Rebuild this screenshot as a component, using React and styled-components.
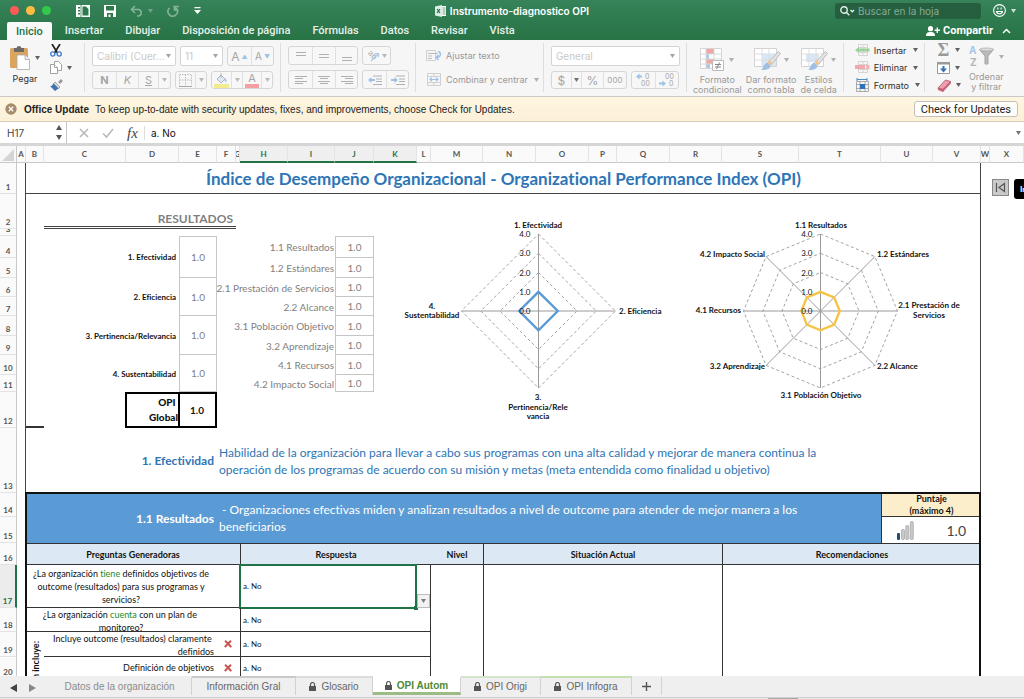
import React, { useState } from "react";
import styled, { createGlobalStyle, css } from "styled-components";

const columns = [
  ["A", 9], ["B", 18], ["C", 82], ["D", 53], ["E", 38], ["F", 19],
  ["G", 4], ["H", 48], ["I", 47], ["J", 39], ["K", 43], ["L", 14],
  ["M", 52], ["N", 53], ["O", 53], ["P", 28], ["Q", 53], ["R", 52],
  ["S", 77], ["T", 82], ["U", 52], ["V", 48], ["W", 9], ["X", 34],
];

const rowHeights = [
  31, 35, 7, 22, 20, 19, 19, 20, 19, 20, 17, 36, 65, 24, 26, 22, 43, 24, 25, 22,
];

const menuTabs = [
  "Insertar", "Dibujar", "Disposición de página", "Fórmulas", "Datos", "Revisar", "Vista",
];

const areas = [
  { name: "1. Efectividad", from: 4 },
  { name: "2. Eficiencia", from: 6 },
  { name: "3. Pertinencia/Relevancia", from: 8 },
  { name: "4. Sustentabilidad", from: 10 },
];

const subareas = [
  "1.1 Resultados",
  "1.2 Estándares",
  "2.1 Prestación de Servicios",
  "2.2 Alcance",
  "3.1 Población Objetivo",
  "3.2 Aprendizaje",
  "4.1 Recursos",
  "4.2 Impacto Social",
];

// "C2:F3" -> grid-area; line 1 is taken by the headings
const at = (range) => {
  const [a, b = a] = range.split(":");
  const col = (ref) => ref.charCodeAt(0) - 63;
  const row = (ref) => Number(ref.slice(1)) + 1;
  return `${row(a)} / ${col(a)} / ${row(b) + 1} / ${col(b) + 1}`;
};

const App = () => {
  const [formula, setFormula] = useState("a. No");
  const [cellName, setCellName] = useState("H17");
  const [search, setSearch] = useState("");

  return (
    <Window>
      <GlobalStyle />
      <Header>
        <TitleBar>
          <QuickBar>
            <Lights>
              <Light $color="#fc5b57" />
              <Light $color="#fdbc40" />
              <Light $color="#34c84a" />
            </Lights>
            <QuickButton aria-label="Plantillas"><TemplateIcon /></QuickButton>
            <QuickButton aria-label="Guardar"><SaveIcon /></QuickButton>
            <QuickButton aria-label="Deshacer" $dim><UndoIcon /><Caret /></QuickButton>
            <QuickButton aria-label="Rehacer" $dim><RedoIcon /></QuickButton>
            <QuickButton aria-label="Personalizar"><MoreIcon /></QuickButton>
          </QuickBar>
          <DocTitle><BookIcon />Instrumento-diagnostico OPI</DocTitle>
          <TitleEnd>
            <Search>
              <SearchIcon />
              <input
                type="text"
                aria-label="Buscar en la hoja"
                placeholder="Buscar en la hoja"
                value={search}
                onChange={(e) => setSearch(e.target.value)}
              />
            </Search>
            <QuickButton aria-label="Comentarios"><SmileIcon /><Caret /></QuickButton>
          </TitleEnd>
        </TitleBar>
        <MenuRow>
          <MenuTab $active>Inicio</MenuTab>
          {menuTabs.map((tab) => (
            <MenuTab key={tab}>{tab}</MenuTab>
          ))}
          <Share><PersonIcon />Compartir</Share>
          <Collapse aria-label="Contraer cinta">
            <svg width="9" height="6" viewBox="0 0 9 6"><path d="M1 5l3.500-3.500L8 5" fill="none" stroke="#fff" strokeWidth="1.500" /></svg>
          </Collapse>
        </MenuRow>
      </Header>

      <Ribbon>
        <PasteGroup>
          <BigButton><IconLine><ClipboardIcon /><Caret /></IconLine>Pegar</BigButton>
          <IconStack>
            <Tool aria-label="Cortar"><CutIcon /></Tool>
            <Tool aria-label="Copiar"><CopyIcon /><Caret /></Tool>
            <Tool aria-label="Copiar formato"><BrushIcon /></Tool>
          </IconStack>
        </PasteGroup>
        <Group>
          <ToolRow>
            <Picker label="Fuente" value="Calibri (Cuer..." width={84} />
            <Picker label="Tamaño" value="11" width={43} />
            <Segment>
              <SegButton aria-label="Aumentar" $w={24} $size={12}>A<Blue>▲</Blue></SegButton>
              <SegButton aria-label="Reducir" $w={23} $size={10}>A<Blue>▼</Blue></SegButton>
            </Segment>
          </ToolRow>
          <ToolRow>
            <Segment>
              <SegButton $w={24}><b>N</b></SegButton>
              <SegButton $w={23}><i>K</i></SegButton>
              <SegButton $w={21}><u>S</u></SegButton>
              <SegButton $w={13} aria-label="Más subrayados"><Caret /></SegButton>
            </Segment>
            <Segment>
              <SegButton $w={20} aria-label="Bordes"><BordersIcon /></SegButton>
              <SegButton $w={12} aria-label="Más bordes"><Caret /></SegButton>
            </Segment>
            <Segment>
              <SegButton $w={20} aria-label="Relleno"><FillIcon /></SegButton>
              <SegButton $w={12} aria-label="Más rellenos"><Caret /></SegButton>
              <SegButton $w={20} aria-label="Color de fuente"><Ink>A</Ink></SegButton>
              <SegButton $w={12} aria-label="Más colores"><Caret /></SegButton>
            </Segment>
          </ToolRow>
        </Group>
        <Group>
          <ToolRow>
            <Segment>
              <SegButton $w={24} aria-label="Arriba"><Lines rows={[[2, 3, 10], [2, 6, 10]]} /></SegButton>
              <SegButton $w={24} aria-label="Medio"><Lines rows={[[2, 5, 10], [2, 8, 10]]} /></SegButton>
              <SegButton $w={23} aria-label="Abajo"><Lines rows={[[2, 8, 10], [2, 11, 10]]} /></SegButton>
            </Segment>
            <Segment>
              <SegButton $w={28} aria-label="Orientación"><OrientIcon /><Caret /></SegButton>
            </Segment>
          </ToolRow>
          <ToolRow>
            <Segment>
              <SegButton $w={24} aria-label="Izquierda"><Lines rows={[[1, 3, 12], [1, 5, 8], [1, 8, 12], [1, 10, 8]]} /></SegButton>
              <SegButton $w={24} aria-label="Centro"><Lines rows={[[1, 3, 12], [3, 5, 8], [1, 8, 12], [3, 10, 8]]} /></SegButton>
              <SegButton $w={23} aria-label="Derecha"><Lines rows={[[1, 3, 12], [5, 5, 8], [1, 8, 12], [5, 10, 8]]} /></SegButton>
            </Segment>
            <Segment>
              <SegButton $w={24} aria-label="Reducir sangría"><IndentIcon /></SegButton>
              <SegButton $w={23} aria-label="Aumentar sangría"><IndentIcon flip /></SegButton>
            </Segment>
          </ToolRow>
        </Group>
        <TextGroup>
          <TextTool $dim><WrapIcon />Ajustar texto</TextTool>
          <TextTool $dim><MergeIcon />Combinar y centrar<Caret /></TextTool>
        </TextGroup>
        <Group>
          <ToolRow><Picker label="Formato de número" value="General" width={129} /></ToolRow>
          <ToolRow>
            <Segment>
              <SegButton $w={20} $size={12}>$</SegButton>
              <SegButton $w={11} $dark aria-label="Más monedas"><Caret /></SegButton>
              <SegButton $w={23} $size={12}>%</SegButton>
              <SegButton $w={24} $size={8}>000</SegButton>
            </Segment>
            <Segment>
              <SegButton $w={24} aria-label="Más decimales"><DecimalIcon /></SegButton>
              <SegButton $w={24} aria-label="Menos decimales"><DecimalIcon less /></SegButton>
            </Segment>
          </ToolRow>
        </Group>
        <WideGroup>
          <BigButton $dim><IconLine><ConditionalIcon /><Caret /></IconLine>Formato<br />condicional</BigButton>
          <BigButton $dim><IconLine><TableBrushIcon /><Caret /></IconLine>Dar formato<br />como tabla</BigButton>
          <BigButton $dim><IconLine><TableBrushIcon small /><Caret /></IconLine>Estilos<br />de celda</BigButton>
        </WideGroup>
        <StackGroup>
          <TextTool><RowIcon color="#9ad29a" arrow />Insertar<Caret /></TextTool>
          <TextTool><RowIcon color="#f2a9ab" />Eliminar<Caret /></TextTool>
          <TextTool><SizeIcon />Formato<Caret /></TextTool>
        </StackGroup>
        <EditGroup>
          <IconStack>
            <Tool aria-label="Autosuma"><Sigma>Σ</Sigma><Caret /></Tool>
            <Tool aria-label="Rellenar"><FillDownIcon /><Caret /></Tool>
            <Tool aria-label="Borrar"><EraserIcon /><Caret /></Tool>
          </IconStack>
          <BigButton $dim><IconLine><SortIcon /><Caret /></IconLine>Ordenar<br />y filtrar</BigButton>
        </EditGroup>
      </Ribbon>

      <UpdateBar>
        <CloseRound aria-label="Cerrar aviso"><RoundXIcon /></CloseRound>
        <b>Office Update</b>
        <span>To keep up-to-date with security updates, fixes, and improvements, choose Check for Updates.</span>
        <UpdateButton>Check for Updates</UpdateButton>
      </UpdateBar>

      <FormulaBar>
        <NameBox>
          <input type="text" aria-label="Cuadro de nombres" value={cellName} onChange={(e) => setCellName(e.target.value)} />
          <svg width="6" height="15" viewBox="0 0 6 15" fill="#555"><path d="M3 0l3 5H0zM3 15l3-5H0z" /></svg>
        </NameBox>
        <FormulaTools>
          <svg width="10" height="10" viewBox="0 0 10 10"><path d="M1 1l8 8M9 1L1 9" stroke="#b9b9b9" strokeWidth="1.600" /></svg>
          <svg width="12" height="10" viewBox="0 0 12 10"><path d="M1 5.500L4.500 9L11 1" fill="none" stroke="#b9b9b9" strokeWidth="1.600" /></svg>
          <Fx>fx</Fx>
        </FormulaTools>
        <FormulaInput type="text" aria-label="Barra de fórmulas" value={formula} onChange={(e) => setFormula(e.target.value)} />
        <Caret />
      </FormulaBar>

      <SheetArea>
        <Sheet>
          <thead>
            <tr>
              <Corner><svg width="12" height="12" viewBox="0 0 12 12"><path d="M12 0v12H0z" fill="#d4d4d4" /></svg></Corner>
              {columns.map(([name]) => (
                <ColHead key={name} $active={"HIJK".includes(name)}>{name}</ColHead>
              ))}
            </tr>
          </thead>
          <tbody>
            <Row n={1}>
              <Frame $at="B1:V13" aria-hidden="true" />
              <TitleCell $at="B1:V1"><h1>Índice de Desempeño Organizacional - Organizational Performance Index (OPI)</h1></TitleCell>
              <NavCell $at="W1:X2">
                <NavButton aria-label="Ir al inicio">
                  <svg width="11" height="11" viewBox="0 0 11 11"><path d="M1.500 1v9M9.500 1.500v8L4 5.500z" fill="none" stroke="#555" strokeWidth="1.200" /></svg>
                </NavButton>
                <NavLabel href="#inicio">Inicio</NavLabel>
              </NavCell>
            </Row>
            <Row n={2}>
              <ResultsTitle $at="C2:F2">RESULTADOS</ResultsTitle>
              <ChartCell $at="L2:Q12"><AreaChart /></ChartCell>
              <ChartCell $at="R2:V12"><SubareaChart /></ChartCell>
            </Row>
            <Row n={3} />
            {[4, 5, 6, 7, 8, 9, 10, 11].map((n) => {
              const area = areas.find((a) => a.from === n);
              return (
                <Row n={n} key={n}>
                  {area && <AreaName $at={`B${n}:D${n + 1}`}>{area.name}</AreaName>}
                  {area && <Score $at={`E${n}:E${n + 1}`} $first={n === 4}>1.0</Score>}
                  <SubName $at={`F${n}:I${n}`}>{subareas[n - 4]}</SubName>
                  <Score $at={`J${n}`} $first={n === 4}>1.0</Score>
                </Row>
              );
            })}
            <Row n={12}>
              <EdgeMark $at="B12" aria-hidden="true" />
              <GlobalName $at="D12">OPI&nbsp;<br />Global</GlobalName>
              <GlobalScore $at="E12">1.0</GlobalScore>
            </Row>
            <Row n={13}>
              <SectionName $at="B13:E13">1. Efectividad</SectionName>
              <SectionText $at="F13:V13">
                Habilidad de la organización para llevar a cabo sus programas con una alta calidad y mejorar de manera continua la<br />
                operación de los programas de acuerdo con su misión y metas (meta entendida como finalidad u objetivo)
              </SectionText>
            </Row>
            <Row n={14}>
              <SectionName $at="B14:E15" $band>1.1 Resultados</SectionName>
              <SectionText $at="F14:T15" $band>
                &nbsp;- Organizaciones efectivas miden y analizan resultados a nivel de outcome para atender de mejor manera a los<br />
                beneficiarios
              </SectionText>
              <PointsHead $at="U14:V14">Puntaje<br />(máximo 4)</PointsHead>
            </Row>
            <Row n={15}>
              <Points $at="U15:V15"><div><BarsIcon />1.0</div></Points>
            </Row>
            <Row n={16}>
              <HeadCell $at="B16:G16">Preguntas Generadoras</HeadCell>
              <HeadCell $at="H16:L16" $line>Respuesta</HeadCell>
              <HeadCell $at="M16">Nivel</HeadCell>
              <HeadCell $at="N16:R16" $line>Situación Actual</HeadCell>
              <HeadCell $at="S16:V16" $line>Recomendaciones</HeadCell>
            </Row>
            <Row n={17} active>
              <Question $at="B17:G17">
                ¿La organización <em>tiene</em> definidos objetivos de<br />outcome (resultados) para sus programas y<br />servicios?
              </Question>
              <Answer $at="H17:L17">a. No</Answer>
              <Selection $at="H17:K17"><Handle /></Selection>
              <DropCell $at="L17"><DropButton aria-label="Abrir lista"><Caret /></DropButton></DropCell>
              <Blank $at="N17:R20" aria-hidden="true" />
              <Blank $at="S17:V20" aria-hidden="true" />
            </Row>
            <Row n={18}>
              <Question $at="B18:G18">
                ¿La organización <em>cuenta</em> con un plan de&nbsp;<br />monitoreo?
              </Question>
              <Answer $at="H18:L18">a. No</Answer>
            </Row>
            <Row n={19}>
              <SideText $at="B19:B20"><span>n incluye:</span></SideText>
              <Question $at="C19:G19" $right>Incluye outcome (resultados) claramente&nbsp;<br />definidos<CrossIcon /></Question>
              <Answer $at="H19:L19">a. No</Answer>
            </Row>
            <Row n={20}>
              <Question $at="C20:G20" $right>Definición de objetivos<CrossIcon /></Question>
              <Answer $at="H20:L20">a. No</Answer>
            </Row>
            <tr><OuterFrame $at="B14:V20" aria-hidden="true" /></tr>
          </tbody>
        </Sheet>
      </SheetArea>

      <SheetTabs>
        <TabArrows>
          <button aria-label="Hoja anterior"><svg width="7" height="8" viewBox="0 0 7 8"><path d="M7 0v8L0 4z" fill="#444" /></svg></button>
          <button aria-label="Hoja siguiente"><svg width="7" height="8" viewBox="0 0 7 8"><path d="M0 0v8l7-4z" fill="#888" /></svg></button>
        </TabArrows>
        <SheetTab $w={144} $faded>Datos de la organización</SheetTab>
        <SheetTab $w={104} $strip="#c9c9c9">Información Gral</SheetTab>
        <SheetTab $w={77} $strip="#dcdcdc"><LockIcon />Glosario</SheetTab>
        <SheetTab $w={88} $active><LockIcon />OPI Autom</SheetTab>
        <SheetTab $w={80} $strip="#d5e5c9"><LockIcon />OPI Origi</SheetTab>
        <SheetTab $w={91} $strip="#c4dfb2"><LockIcon />OPI Infogra</SheetTab>
        <SheetTab $w={30} aria-label="Agregar hoja">
          <svg width="9" height="9" viewBox="0 0 9 9"><path d="M4.500 0v9M0 4.500h9" stroke="#555" strokeWidth="1.400" /></svg>
        </SheetTab>
      </SheetTabs>
      <ScrollTrack><ScrollThumb /></ScrollTrack>
    </Window>
  );
};

const Row = ({ n, active, children }) => (
  <tr>
    <RowHead scope="row" $at={n} $active={active}>{n}</RowHead>
    {children}
  </tr>
);

const Picker = ({ label, value, width }) => (
  <PickerBox $w={width}>
    <select aria-label={label} defaultValue={value}>
      <option>{value}</option>
    </select>
    <Caret />
  </PickerBox>
);

const Caret = () => (
  <CaretSvg width="5" height="4" viewBox="0 0 5 4"><path d="M0 0h5L2.500 4z" fill="currentColor" /></CaretSvg>
);

const Lines = ({ rows }) => (
  <svg width="14" height="14" viewBox="0 0 14 14">
    {rows.map(([x, y, w]) => (
      <rect key={y} x={x} y={y} width={w} height="1" fill="#b0b0b0" />
    ))}
  </svg>
);

/* radar charts */

const ring = (cx, cy, r, n) =>
  Array.from({ length: n }, (_, i) => {
    const a = (Math.PI * 2 * i) / n;
    return `${(cx + r * Math.sin(a)).toFixed(1)},${(cy - r * Math.cos(a)).toFixed(1)}`;
  });

const Radar = ({ cx, cy, r, sides, color, width, children }) => (
  <ChartSvg width={width} height="234" viewBox={`0 0 ${width} 234`}>
    {[2, 3, 4].map((k) => (
      <polygon key={k} points={ring(cx, cy, (r * k) / 4, sides).join(" ")} fill="none" stroke="#a3a3a3" strokeDasharray="3 2.500" />
    ))}
    {ring(cx, cy, r, sides).map((p) => (
      <line key={p} x1={cx} y1={cy} x2={p.split(",")[0]} y2={p.split(",")[1]} stroke="#9a9a9a" />
    ))}
    <polygon points={ring(cx, cy, r / 4, sides).join(" ")} fill="none" stroke={color} strokeWidth="2.400" />
    {[0, 1, 2, 3, 4].map((k) => (
      <Tick key={k} x={cx - 8} y={cy + 3 - (r * k) / 4} textAnchor="end">{k}.0</Tick>
    ))}
    {children}
  </ChartSvg>
);

const AreaChart = () => (
  <Radar cx={121.5} cy={117} r={77} sides={4} color="#5b9bd5" width={253}>
    <text x="121" y="34" textAnchor="middle">1. Efectividad</text>
    <text x="202" y="120" textAnchor="start">2. Eficiencia</text>
    <text x="121" y="206" textAnchor="middle">3.</text>
    <text x="121" y="216" textAnchor="middle">Pertinencia/Rele</text>
    <text x="121" y="225" textAnchor="middle">vancia</text>
    <text x="15" y="115" textAnchor="middle">4.</text>
    <text x="15" y="124" textAnchor="middle">Sustentabilidad</text>
  </Radar>
);

const SubareaChart = () => (
  <Radar cx={150.5} cy={117} r={77} sides={8} color="#f6c344" width={311}>
    <text x="151" y="34" textAnchor="middle">1.1 Resultados</text>
    <text x="207" y="63" textAnchor="start">1.2 Estándares</text>
    <text x="259" y="114" textAnchor="middle">2.1 Prestación de</text>
    <text x="259" y="124" textAnchor="middle">Servicios</text>
    <text x="207" y="175" textAnchor="start">2.2 Alcance</text>
    <text x="151" y="204" textAnchor="middle">3.1 Población Objetivo</text>
    <text x="95" y="175" textAnchor="end">3.2 Aprendizaje</text>
    <text x="71" y="119" textAnchor="end">4.1 Recursos</text>
    <text x="95" y="63" textAnchor="end">4.2 Impacto Social</text>
  </Radar>
);

/* icons */

const TemplateIcon = () => (
  <svg width="14" height="12" viewBox="0 0 14 12"><path d="M0 0h14v12H0z" fill="#fff" /><path d="M2 2h2v1.500H2zM2 5h2v1.500H2zM2 8h2v1.500H2zM6.500 1.500H10l2.500 2.500v6.500h-6z" fill="#2c7a4b" /><path d="M5 0v12" stroke="#2c7a4b" strokeWidth=".8" /></svg>
);
const SaveIcon = () => (
  <svg width="12" height="12" viewBox="0 0 12 12"><path d="M0 0h12v12H0z" fill="#fff" /><path d="M2 1h8v4.500H2zM3 8h6v4H3z" fill="#2c7a4b" /><path d="M4.500 9.500h2V12h-2z" fill="#fff" /></svg>
);
const UndoIcon = () => (
  <svg width="13" height="12" viewBox="0 0 13 12" fill="none" stroke="#fff" strokeWidth="1.600"><path d="M5 1L1.500 4.500L5 8M2 4.500h6.500a3.300 3.300 0 0 1 0 6.500H7" /></svg>
);
const RedoIcon = () => (
  <svg width="13" height="12" viewBox="0 0 13 12" fill="none" stroke="#fff" strokeWidth="1.600"><path d="M7.500 1v4H11.500M2.500 3A4.700 4.700 0 1 0 10 4.500L7.500 1.500H12" /></svg>
);
const MoreIcon = () => (
  <svg width="7" height="7" viewBox="0 0 7 7" fill="#fff"><path d="M.5 0h6v1.300h-6zM0 3h7L3.500 7z" /></svg>
);
const BookIcon = () => (
  <svg width="11" height="12" viewBox="0 0 11 12"><path d="M5 1h6v10H5z" fill="#fff" /><path d="M0 1.500L7 0v12L0 10.500z" fill="#dfeee5" /><path d="M2 4l3 4M5 4L2 8" stroke="#1f6e43" strokeWidth="1.200" /><path d="M7.500 3h3M7.500 5h3M7.500 7h3M7.500 9h3" stroke="#1f6e43" strokeWidth=".7" /></svg>
);
const SearchIcon = () => (
  <svg width="15" height="10" viewBox="0 0 15 10" fill="none" stroke="#e3efe8" strokeWidth="1.400"><circle cx="4" cy="4" r="3.200" /><path d="M6.500 6.500L9.300 9.300M10.500 4l1.800 1.800L14 4" /></svg>
);
const SmileIcon = () => (
  <svg width="13" height="13" viewBox="0 0 13 13" fill="none" stroke="#fff" strokeWidth="1.100"><circle cx="6.500" cy="6.500" r="5.900" /><path d="M3.500 7.500a3.100 3.100 0 0 0 6 0z" /><path d="M4.900 3.500v2M8.100 3.500v2" /></svg>
);
const PersonIcon = () => (
  <svg width="14" height="10" viewBox="0 0 14 10" fill="#fff"><circle cx="4.500" cy="2.700" r="2.600" /><path d="M0 10c0-3.500 2-4 4.500-4S9 6.500 9 10z" /><path d="M11.300 1.500v5.400M8.600 4.200H14" stroke="#fff" strokeWidth="1.400" /></svg>
);
const ClipboardIcon = () => (
  <svg width="20" height="25" viewBox="0 0 20 25"><rect x="0" y="3" width="18" height="20" rx="1.500" fill="#dca55e" /><path d="M4 3h2.500a2.600 2.600 0 0 1 5 0H14v4H4z" fill="#6a6a6a" /><path d="M7 10h8l4.500 4.500V24.500H7z" fill="#fff" stroke="#aaa" strokeWidth=".8" /><path d="M15 10v4.500h4.500" fill="#eee" stroke="#aaa" strokeWidth=".8" /></svg>
);
const CutIcon = () => (
  <svg width="12" height="13" viewBox="0 0 12 13" fill="none"><path d="M2 0l5.500 9M10 0L4.500 9" stroke="#222" strokeWidth="1.700" /><circle cx="2.800" cy="10" r="2.100" stroke="#3d7fc4" strokeWidth="1.300" /><circle cx="9.200" cy="10" r="2.100" stroke="#3d7fc4" strokeWidth="1.300" /></svg>
);
const CopyIcon = () => (
  <svg width="12" height="13" viewBox="0 0 12 13" fill="#fff" stroke="#a2a2a2"><path d="M4.500 .5h4l3 3v6h-7z" /><path d="M.5 3.500h4l3 3v6h-7z" /><path d="M4.500 3.500v3h3" /></svg>
);
const BrushIcon = () => (
  <svg width="13" height="12" viewBox="0 0 13 12"><path d="M8 3l3-3 2 2-3 3z" fill="#999" /><path d="M5 3l5 5-1.500 1.500-5-5z" fill="#d9d9d9" stroke="#777" strokeWidth=".6" /><path d="M3.500 4.500l5 5L5 12 0 7c1.500.3 2.500-.7 3.500-2.500z" fill="#3f74b0" /></svg>
);
const BordersIcon = () => (
  <svg width="13" height="13" viewBox="0 0 13 13" fill="none" stroke="#c0c0c0"><path d="M.5 .5h12v11M.5 .5v11M6.500 .5v11M.5 6h12" strokeDasharray="1.500 1" /><path d="M0 12.500h13" stroke="#aaa" /></svg>
);
const FillIcon = () => (
  <svg width="15" height="15" viewBox="0 0 15 15"><path d="M3 6l4-4 4 4-4 4z" fill="#dcebf8" stroke="#b5b5b5" /><path d="M11 5c2 2 2 3 1 4.500L10 7z" fill="#a8c9ea" /><path d="M7 0v5" stroke="#b5b5b5" /><path d="M0 11h15v4H0z" fill="#f3ec8e" /></svg>
);
const OrientIcon = () => (
  <svg width="14" height="13" viewBox="0 0 14 13" overflow="visible"><text x="1" y="6" fontSize="8" fill="#aaa" transform="rotate(45 3 6)">ab</text><path d="M5 12l7-7M9 4.500h3.500V8" fill="none" stroke="#a8c9ea" strokeWidth="1.200" /></svg>
);
const IndentIcon = ({ flip }) => (
  <svg width="14" height="10" viewBox="0 0 14 10"><path d={flip ? "M7 5L3.500 2v2H0v2h3.500v2z" : "M0 5l3.500-3v2H7v2H3.500v2z"} fill="#9cc2e8" /><path d="M5 1h9M8 4h6M8 6.500h6M5 9.500h9" stroke="#b0b0b0" /></svg>
);
const WrapIcon = () => (
  <svg width="16" height="11" viewBox="0 0 16 11" fill="none"><path d="M.5 .5h9v10h-9z" stroke="#cfcfcf" /><path d="M2 3.500h10M2 6h4M2 8.500h4" stroke="#bbb" /><path d="M12 1.500c3.500 0 3.500 6-1.500 6M12.500 5L10 7.500 12.500 10" stroke="#9cc2e8" strokeWidth="1.500" /></svg>
);
const MergeIcon = () => (
  <svg width="16" height="13" viewBox="0 0 16 13" fill="none"><path d="M1.500 .5h13v12h-13zM1.500 3.500h13M1.500 9.500h13M8 .5v3M8 9.500v3" stroke="#cfcfcf" /><path d="M4 6.500h8M6 4.800L4 6.500l2 1.700M10 4.800l2 1.700-2 1.700" stroke="#9cc2e8" strokeWidth="1.200" /></svg>
);
const DecimalIcon = ({ less }) => (
  <svg width="16" height="14" viewBox="0 0 16 14" fill="#a6a6a6">
    <text x={less ? 6 : 10} y="6" fontSize="7">{less ? "00" : "0"}</text>
    <text x={less ? 10 : 6} y="13" fontSize="7">{less ? "0" : "00"}</text>
    <path d={less ? "M7 10.500L3.500 7.500v2H0v2h3.500v2z" : "M1 3.500l3.500-3v2H7v2H4.500v2z"} fill="#9cc2e8" />
  </svg>
);
const ConditionalIcon = () => (
  <svg width="24" height="23" viewBox="0 0 24 23" fill="none"><path d="M.5 .5h21v20H.5z" fill="#fff" stroke="#d5d5d5" /><path d="M6 1h8v5H6zM6 11h8v5H6z" fill="#f0a6a6" /><path d="M6 6h3v5H6zM6 16h4v4H6z" fill="#a9c8ea" /><path d="M.5 6h21M.5 11h21M.5 16h21M6 .5v20M14 .5v20" stroke="#d9d9d9" /><path d="M12.500 12.500h11v10h-11z" fill="#fff" stroke="#bbb" /><path d="M15 16.500h6M15 19h6M19.500 14.500l-3 6.500" stroke="#888" /></svg>
);
const TableBrushIcon = ({ small }) => (
  <svg width="27" height="23" viewBox="0 0 27 23" fill="none"><path d="M.5 .5h22v18H.5z" fill="#fff" stroke="#d2d2d2" /><path d={small ? "M5 6h13v8H5z" : "M8 6h14v12H8z"} fill="#d9e8f6" /><path d="M.5 6h22M.5 12h22M8 .5v18M15 .5v18" stroke="#ddd" /><path d="M24.500 3.500l2 2-9 11-3-2.500z" fill="#e3e3e3" stroke="#aaa" strokeWidth=".7" /><path d="M7 22c2.500-1 2-6.500 6.500-7.500l3 3c-.5 4-5 5-9.500 4.500z" fill="#9fc0e4" /><path d="M13.500 14l3 3.500 2-2-3-3.500z" fill="#f2c38b" /></svg>
);
const RowIcon = ({ color, arrow }) => (
  <svg width="15" height="13" viewBox="0 0 15 13" fill="none"><path d="M3.500 .5h9v11h-9zM3.500 3.500h9M3.500 8.500h9M8 .5v11" stroke="#d5d5d5" /><path d={arrow ? "M0 6l4-3v1.500h10.500v3H4V9z" : "M0 4h10v4H0z"} fill={color} />{!arrow && <path d="M11 4l3.500 4M14.500 4L11 8" stroke={color} strokeWidth="1.300" />}</svg>
);
const SizeIcon = () => (
  <svg width="15" height="14" viewBox="0 0 15 14" fill="none"><path d="M1.500 3.500h12v10h-12zM1.500 6.500h12M1.500 10.500h12M5 3.500v10M10 3.500v10" stroke="#999" strokeWidth=".8" /><path d="M5 6h5v5H5z" fill="#2f72b9" /><path d="M2 1.500h10M2 0v3M12 0v3" stroke="#4c8ccb" /></svg>
);
const FillDownIcon = () => (
  <svg width="13" height="12" viewBox="0 0 13 12"><path d="M.5 .5h12v11H.5z" fill="#fff" stroke="#999" /><path d="M0 0h13v2.500H0z" fill="#999" /><path d="M5.500 4h2v2.500H10l-3.500 4-3.500-4h2.500z" fill="#2f72b9" /></svg>
);
const EraserIcon = () => (
  <svg width="14" height="13" viewBox="0 0 14 13"><path d="M1 9L8.500 1l5 1.500L6 10.500z" fill="#ee9fae" stroke="#b2566a" strokeWidth=".8" /><path d="M1 9l5 1.500v2L1.500 11zM6 10.500l7.500-8v2L6 12.500z" fill="#d8677f" stroke="#b2566a" strokeWidth=".6" /></svg>
);
const SortIcon = () => (
  <svg width="25" height="23" viewBox="0 0 25 23"><text x="0" y="9" fontSize="10" fill="#a9c8ea" fontWeight="bold">A</text><text x="1" y="21" fontSize="10" fill="#b5b5b5" fontWeight="bold">Z</text><path d="M10.500 4.500h14L19 11v8h-3v-8z" fill="#b9b9b9" stroke="#a5a5a5" /><ellipse cx="17.500" cy="4.500" rx="7" ry="1.500" fill="#ddd" stroke="#a5a5a5" strokeWidth=".7" /></svg>
);
const RoundXIcon = () => (
  <svg width="12" height="12" viewBox="0 0 12 12"><circle cx="6" cy="6" r="5.700" fill="#a58c6c" /><path d="M3.800 3.800l4.400 4.400M8.200 3.800L3.800 8.200" stroke="#fff" strokeWidth="1.300" /></svg>
);
const BarsIcon = () => (
  <svg width="17" height="19" viewBox="0 0 17 19"><rect x="0" y="12" width="3" height="7" rx="1" fill="#1f4e79" /><g fill="#c9c9c9" stroke="#999" strokeWidth=".6"><rect x="4.500" y="8.500" width="3" height="10" rx="1" /><rect x="8.800" y="4.500" width="3" height="14" rx="1" /><rect x="13.300" y=".5" width="3" height="18" rx="1" /></g></svg>
);
const CrossIcon = () => (
  <CrossSvg width="8" height="8" viewBox="0 0 8 8"><path d="M1 .8Q4 3 7.200 7.200M7 .8Q4 3.500 .8 7.200" fill="none" stroke="#c9524f" strokeWidth="2" /></CrossSvg>
);
const LockIcon = () => (
  <svg width="7" height="9" viewBox="0 0 7 9"><rect y="4" width="7" height="5" fill="#555" /><path d="M1.500 4V2.500a2 2 0 0 1 4 0V4" fill="none" stroke="#555" strokeWidth="1.200" /></svg>
);

const GlobalStyle = createGlobalStyle`
  * {
    box-sizing: border-box;
  }
  body {
    margin: 0;
    font-family: Inter, "Liberation Sans", sans-serif;
  }
  button, input, select {
    margin: 0;
    padding: 0;
    border: none;
    background: none;
    color: inherit;
    font: inherit;
    outline: none;
  }
  svg {
    display: block;
    flex: none;
  }
`;

const Window = styled.div`
  display: flex;
  flex-direction: column;
  height: 100vh;
  overflow: hidden;
  background: #fff;
  white-space: nowrap;
`;

const Header = styled.header`
  flex: none;
  height: 40px;
  background: linear-gradient(#37835a, #277345);
  color: #fff;
`;

const TitleBar = styled.div`
  display: grid;
  grid-template-columns: 1fr auto 1fr;
  align-items: center;
  height: 21px;
`;

const QuickBar = styled.div`
  display: flex;
  align-items: center;
  gap: 14px;
  padding-left: 10px;
`;

const Lights = styled.div`
  display: flex;
  gap: 7px;
  margin-right: 11px;
`;

const Light = styled.span`
  width: 9px;
  height: 9px;
  border-radius: 50%;
  background: ${(p) => p.$color};
`;

const QuickButton = styled.button`
  display: flex;
  align-items: center;
  gap: 5px;
  opacity: ${(p) => (p.$dim ? 0.4 : 1)};
`;

const DocTitle = styled.div`
  display: flex;
  gap: 4px;
  align-items: center;
  font-size: 10px;
  font-weight: 600;
`;

const TitleEnd = styled.div`
  display: flex;
  justify-content: flex-end;
  align-items: center;
  gap: 12px;
  padding-right: 8px;
`;

const Search = styled.label`
  display: flex;
  align-items: center;
  gap: 3px;
  width: 146px;
  height: 16px;
  padding-left: 5px;
  border-radius: 3px;
  background: #255f40;
  font-size: 10px;
  & input {
    flex: 1;
    min-width: 0;
  }
  & input::placeholder {
    color: #86ab96;
    opacity: 1;
  }
`;

const MenuRow = styled.nav`
  display: flex;
  align-items: stretch;
  height: 19px;
  padding-left: 7px;
  font-family: Roboto, sans-serif;
`;

const MenuTab = styled.button`
  padding: 0 11px;
  font-size: 11px;
  font-weight: 500;
  color: #e6f1ea;
  ${(p) =>
    p.$active &&
    css`
      margin: 1px 2px 0 0;
      padding: 0 9px;
      border-radius: 2px 2px 0 0;
      background: #f8f8f8;
      color: #277345;
    `}
`;

const Share = styled.button`
  display: flex;
  align-items: center;
  gap: 3px;
  margin-left: auto;
  font-size: 11px;
  font-weight: 700;
`;

const Collapse = styled.button`
  padding: 0 13px 0 9px;
`;

const Ribbon = styled.section`
  display: flex;
  flex: none;
  height: 57px;
  padding: 3px 0 4px;
  border-bottom: 1px solid #c9c9c9;
  background: #f6f6f6;
  color: #303030;
  font-size: 9px;
`;

const CaretSvg = styled.svg`
  opacity: 0.75;
`;

const groupLine = css`
  border-right: 1px solid #dedede;
`;

const Group = styled.div`
  ${groupLine}
  display: flex;
  flex: none;
  flex-direction: column;
  gap: 5px;
  padding: 3px 6px 3px 7px;
  color: #a5a5a5;
`;

const TextGroup = styled(Group)`
  padding: 3px 4px 3px 10px;
`;

const PasteGroup = styled.div`
  ${groupLine}
  display: flex;
  flex: none;
  gap: 10px;
  width: 85px;
  padding-left: 10px;
`;

const WideGroup = styled.div`
  ${groupLine}
  display: flex;
  flex: none;
  gap: 4px;
  padding: 3px 6px 0;
`;

const StackGroup = styled.div`
  ${groupLine}
  display: flex;
  flex: none;
  flex-direction: column;
  justify-content: space-between;
  width: 81px;
  padding-left: 11px;
`;

const EditGroup = styled.div`
  display: flex;
  flex: none;
  gap: 8px;
  padding-left: 12px;
`;

const IconStack = styled.div`
  display: flex;
  flex-direction: column;
  justify-content: space-between;
`;

const Tool = styled.button`
  display: flex;
  align-items: center;
  gap: 5px;
  height: 14px;
`;

const Sigma = styled.span`
  color: #999;
  font: bold 18px/14px "Liberation Serif", serif;
  width: 13px;
`;

const BigButton = styled.button`
  display: flex;
  flex-direction: column;
  align-items: center;
  line-height: 10px;
  color: ${(p) => (p.$dim ? "#999" : "#303030")};
`;

const IconLine = styled.span`
  display: flex;
  align-items: center;
  gap: 5px;
  height: 25px;
  margin: 2px 0 4px;
  ${BigButton} + ${BigButton} & {
    gap: 3px;
  }
`;

const ToolRow = styled.div`
  display: flex;
  gap: 4px;
  height: 20px;
`;

const PickerBox = styled.div`
  display: flex;
  align-items: center;
  width: ${(p) => p.$w}px;
  height: 20px;
  padding: 0 4px;
  border: 1px solid #d4d4d4;
  border-radius: 2px;
  background: #fff;
  color: #888;
  & select {
    flex: 1;
    min-width: 0;
    appearance: none;
    color: #c9c9c9;
    font-size: 10px;
  }
`;

const Segment = styled.div`
  display: flex;
  border: 1px solid #d6d6d6;
  border-radius: 3px;
  background: #f7f7f7;
`;

const SegButton = styled.button`
  display: flex;
  align-items: center;
  justify-content: center;
  gap: 2px;
  width: ${(p) => p.$w - 1}px;
  font-size: ${(p) => p.$size || 11}px;
  color: ${(p) => (p.$dark ? "#444" : "#a5a5a5")};
  & + & {
    border-left: 1px solid #e0e0e0;
  }
`;

const Blue = styled.span`
  color: #9cc2e8;
  font-size: 6px;
`;

const Ink = styled.span`
  width: 14px;
  border-bottom: 4px solid #f3a0a3;
  line-height: 11px;
`;

const TextTool = styled.button`
  display: flex;
  align-items: center;
  gap: 4px;
  height: ${(p) => (p.$dim ? 20 : 14)}px;
  color: ${(p) => (p.$dim ? "#999" : "#303030")};
  & ${CaretSvg} {
    margin-left: 2px;
  }
`;

const UpdateBar = styled.div`
  display: flex;
  flex: none;
  align-items: center;
  gap: 6px;
  height: 25px;
  padding: 0 6px 0 5px;
  border-bottom: 1px solid #d5cdb9;
  background: linear-gradient(#fef6e0, #fcf0d9);
  color: #222;
  font: 10px "Liberation Sans", sans-serif;
`;

const CloseRound = styled.button`
  margin-right: 1px;
`;

const UpdateButton = styled.button`
  height: 16px;
  margin-left: auto;
  padding: 0 6px;
  border: 1px solid #c3c0b8;
  border-radius: 3px;
  background: #fffefb;
  font: 11px Roboto, sans-serif;
`;

const FormulaBar = styled.div`
  display: flex;
  flex: none;
  align-items: center;
  height: 24px;
  padding-right: 3px;
  border-bottom: 3px solid #d6d6d6;
  background: #fff;
  color: #444;
  font-size: 10px;
`;

const NameBox = styled.div`
  display: flex;
  align-items: center;
  justify-content: space-between;
  width: 67px;
  height: 21px;
  padding: 0 4px 0 7px;
  border-right: 1px solid #c6c6c6;
  & input {
    width: 40px;
  }
`;

const FormulaTools = styled.div`
  display: flex;
  align-items: center;
  gap: 13px;
  width: 78px;
  padding-left: 12px;
  border-right: 1px solid #ddd;
`;

const Fx = styled.span`
  font: italic 15px/14px "Liberation Serif", serif;
`;

const FormulaInput = styled.input`
  flex: 1;
  padding-left: 6px;
  color: #111;
`;

const SheetArea = styled.main`
  flex: 1;
  min-height: 0;
  overflow: hidden;
`;

const Sheet = styled.table`
  display: grid;
  grid-template-columns: 17px ${columns.map((c) => `minmax(0, ${c[1]}fr)`).join(" ")};
  grid-template-rows: 17px ${rowHeights.map((h) => `${h}px`).join(" ")};
  font-family: Lato, sans-serif;
  font-variant-ligatures: none;
  color: #111;
  & thead,
  & tbody,
  & tr {
    display: contents;
  }
`;

const Corner = styled.th`
  display: flex;
  justify-content: flex-end;
  padding: 3px 2px 0 0;
  border-right: 1px solid #c9c9c9;
  border-bottom: 1px solid #c9c9c9;
  background: #f8f8f8;
`;

const ColHead = styled.th`
  display: flex;
  align-items: center;
  justify-content: center;
  padding: 0;
  overflow: hidden;
  border-right: 1px solid #e3e3e3;
  border-bottom: ${(p) => (p.$active ? "2px solid #217346" : "1px solid #c9c9c9")};
  background: ${(p) => (p.$active ? "#efefef" : "#fafafa")};
  color: ${(p) => (p.$active ? "#217346" : "#555")};
  font-size: 8px;
  font-weight: 700;
`;

const RowHead = styled.th`
  grid-column: 1;
  grid-row: ${(p) => p.$at + 1};
  display: flex;
  align-items: flex-end;
  justify-content: center;
  padding: 0;
  overflow: hidden;
  border-right: ${(p) => (p.$active ? "2px solid #217346" : "1px solid #c9c9c9")};
  border-bottom: 1px solid #e3e3e3;
  background: ${(p) => (p.$active ? "#ececec" : "#fafafa")};
  color: ${(p) => (p.$active ? "#217346" : "#555")};
  font-size: 8px;
  font-weight: 700;
  line-height: 11px;
`;

const Cell = styled.td`
  grid-area: ${(p) => at(p.$at)};
  position: relative;
  display: flex;
  align-items: center;
  min-width: 0;
  padding: 0;
`;

const Frame = styled(Cell)`
  margin-left: -1px;
  border: solid #444;
  border-width: 0 1px;
`;

const OuterFrame = styled(Cell)`
  margin: -1px 0 0 -1px;
  border: solid #111;
  border-width: 2px 2px 0;
  pointer-events: none;
`;

const TitleCell = styled(Cell)`
  justify-content: center;
  border-bottom: 1px solid #444;
  & h1 {
    margin: 0;
    color: #2e75b6;
    font-size: 17px;
    font-weight: 700;
  }
`;

const NavCell = styled(Cell)`
  align-items: flex-start;
  gap: 5px;
  padding: 16px 0 0 11px;
  overflow: hidden;
`;

const NavButton = styled.button`
  display: grid;
  flex: none;
  place-items: center;
  width: 17px;
  height: 17px;
  border: 1px solid #888;
  background: #c9c9c9;
`;

const NavLabel = styled.a`
  flex: none;
  width: 40px;
  height: 20px;
  padding-left: 6px;
  border-radius: 3px 0 0 3px;
  background: #000;
  color: #fff;
  font-size: 8px;
  font-weight: 700;
  line-height: 20px;
  text-decoration: none;
`;

const ResultsTitle = styled(Cell)`
  align-items: flex-end;
  justify-content: flex-end;
  padding-right: 3px;
  border-bottom: 3px double #444;
  color: #7f7f7f;
  font-size: 12px;
  font-weight: 700;
  line-height: 14px;
`;

const ChartCell = styled(Cell)`
  align-items: flex-start;
`;

const ChartSvg = styled.svg`
  overflow: visible;
  & text {
    font-family: Lato, sans-serif;
    font-size: 8px;
    font-weight: 700;
    fill: #111;
  }
`;

const Tick = styled.text`
  ${ChartSvg} & {
    font-weight: 400;
  }
`;

const AreaName = styled(Cell)`
  justify-content: flex-end;
  padding-right: 3px;
  font-size: 8px;
  font-weight: 700;
`;

const Score = styled(Cell)`
  justify-content: center;
  border: solid #c6c6c6;
  border-width: ${(p) => (p.$first ? 1 : 0)}px 1px 1px;
  color: #7f7f7f;
  font-size: 10px;
`;

const SubName = styled(Cell)`
  justify-content: flex-end;
  padding-right: 1px;
  color: #7f7f7f;
  font-size: 10px;
`;

const EdgeMark = styled(Cell)`
  border-bottom: 2px solid #333;
`;

const GlobalName = styled(Cell)`
  justify-content: flex-end;
  margin: 0 -1px 0 -1px;
  border: 2px solid #000;
  font-size: 10px;
  font-weight: 900;
  line-height: 15px;
  text-align: right;
`;

const GlobalScore = styled(Cell)`
  justify-content: center;
  border: solid #000;
  border-width: 2px 2px 2px 0;
  font-size: 10px;
  font-weight: 700;
`;

const SectionName = styled(Cell)`
  justify-content: flex-end;
  padding-right: 3px;
  background: ${(p) => (p.$band ? "#5b9bd5" : "none")};
  color: ${(p) => (p.$band ? "#fff" : "#2e75b6")};
  font-size: 12px;
  font-weight: 700;
`;

const SectionText = styled(Cell)`
  padding-left: 2px;
  background: ${(p) => (p.$band ? "#5b9bd5" : "none")};
  color: ${(p) => (p.$band ? "#fff" : "#2e75b6")};
  font-size: 12px;
  line-height: 17px;
`;

const PointsHead = styled(Cell)`
  justify-content: center;
  border: solid #333;
  border-width: 0 0 1px 1px;
  background: #fdeecb;
  font-size: 9px;
  font-weight: 700;
  line-height: 12px;
  text-align: center;
`;

const Points = styled(Cell)`
  border-left: 1px solid #333;
  color: #444;
  font-size: 14px;
  & div {
    display: flex;
    flex: 1;
    align-items: center;
    justify-content: space-between;
    padding: 0 15px;
  }
`;

const HeadCell = styled(Cell)`
  justify-content: center;
  border: solid #333;
  border-width: 1px 0 1px ${(p) => (p.$line ? 1 : 0)}px;
  background: #dce9f5;
  font-size: 9px;
  font-weight: 700;
`;

const Question = styled(Cell)`
  display: block;
  align-content: center;
  padding-right: ${(p) => (p.$right ? 26 : 24)}px;
  border-bottom: 1px solid #333;
  font-size: 9px;
  line-height: 13px;
  text-align: ${(p) => (p.$right ? "right" : "center")};
  & em {
    color: #228b22;
    font-style: normal;
  }
`;

const CrossSvg = styled.svg`
  position: absolute;
  right: 8px;
  top: 50%;
  margin-top: -4px;
`;

const Answer = styled(Cell)`
  padding-left: 2px;
  border: solid #333;
  border-width: 0 1px 1px;
  font-size: 8px;
`;

const Selection = styled(Cell)`
  margin: -1px 0 -1px -1px;
  border: 2px solid #217346;
`;

const Handle = styled.span`
  position: absolute;
  right: -3px;
  bottom: -3px;
  width: 4px;
  height: 4px;
  background: #217346;
`;

const DropCell = styled(Cell)`
  align-items: flex-end;
  padding-right: 1px;
`;

const DropButton = styled.button`
  display: grid;
  place-items: center;
  width: 100%;
  height: 14px;
  border: 1px solid #bbb;
  background: #f2f2f2;
  color: #555;
`;

const Blank = styled(Cell)`
  border-left: 1px solid #333;
`;

const SideText = styled(Cell)`
  justify-content: center;
  align-items: flex-start;
  padding-top: 9px;
  font-size: 9px;
  font-weight: 700;
  & span {
    writing-mode: vertical-rl;
    transform: rotate(180deg);
  }
`;

const SheetTabs = styled.footer`
  display: flex;
  flex: none;
  height: 21px;
  padding-bottom: 2px;
  background: #efefef;
  color: #666;
  font: 10px "Liberation Sans", sans-serif;
`;

const TabArrows = styled.div`
  display: flex;
  align-items: center;
  gap: 12px;
  width: 48px;
  padding: 4px 0 0 10px;
`;

const SheetTab = styled.button`
  display: flex;
  align-items: center;
  justify-content: center;
  gap: 5px;
  width: ${(p) => p.$w}px;
  border-top: 2px solid ${(p) => p.$strip || "transparent"};
  border-right: 1px solid #d2d2d2;
  color: ${(p) => (p.$faded ? "#8c8c8c" : "#666")};
  ${(p) =>
    p.$active &&
    css`
      border-top-color: #fff;
      border-bottom: 3px solid #9bbd85;
      background: #fff;
      color: #4e8a36;
      font-weight: 700;
    `}
`;

const ScrollTrack = styled.div`
  flex: none;
  height: 2px;
  padding-left: 75%;
  border-top: 1px solid #cfcfcf;
  background: #e8e8e8;
`;

const ScrollThumb = styled.div`
  width: 30px;
  height: 1px;
  background: #aaa;
`;

export default App;
